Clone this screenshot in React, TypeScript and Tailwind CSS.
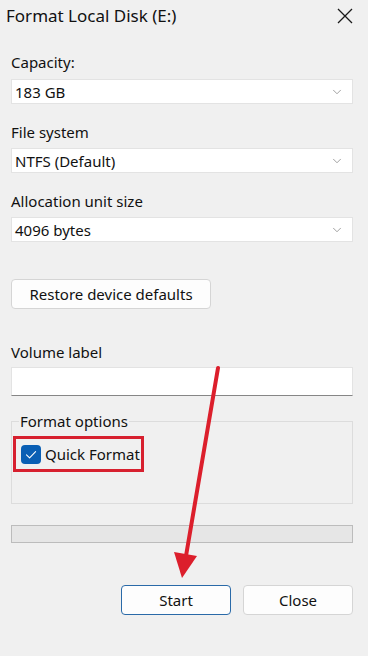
import { ChevronDown } from "lucide-react";

const Combo = ({ value }: { value: string }) => (
  <div className="mt-[6px] flex h-[25px] items-center justify-between border border-[#e3e3e3] bg-white pl-[3px] pr-[8px]">
    <span className="leading-[20px]">{value}</span>
    <ChevronDown className="h-[14px] w-[14px] text-[#7a7a7a]" strokeWidth={1.2} />
  </div>
);

const Label = ({ text, className = "" }: { text: string; className?: string }) => (
  <div className={`h-[20px] leading-[20px] ${className}`}>{text}</div>
);

export default function App() {
  return (
    <div className="relative h-[656px] w-[368px] overflow-hidden bg-[#f0f0f0] text-[15px] text-[#111111] [font-family:'Noto_Sans',sans-serif]">
      <div className="flex h-[32px] items-center justify-between pl-[6px] pr-[15px]">
        <span className="text-[17px] leading-[24px]">Format Local Disk (E:)</span>
        <svg viewBox="0 0 16 16" className="h-[16px] w-[16px]">
          <path d="M1 1 L15 15 M15 1 L1 15" stroke="#1a1a1a" strokeWidth="1.3" fill="none" />
        </svg>
      </div>

      <div className="flex flex-col px-[11px] pr-[15px]">
        <Label text="Capacity:" className="mt-[20px]" />
        <div className="mt-[1px]" />
        <Combo value="183 GB" />

        <Label text="File system" className="mt-[18px]" />
        <Combo value="NTFS (Default)" />

        <Label text="Allocation unit size" className="mt-[18px]" />
        <Combo value="4096 bytes" />

        <button className="mt-[37px] h-[30px] w-[200px] rounded-[4px] border border-[#d5d5d5] bg-[#fdfdfd] leading-[20px]">
          Restore device defaults
        </button>

        <Label text="Volume label" className="mt-[33px]" />
        <div className="mt-[5px] h-[29px] border border-[#e3e3e3] border-b-[#868686] bg-white" />

        <fieldset className="mt-[15px] h-[93px] border border-[#dcdcdc] pl-[1px]">
          <legend className="ml-[6px] px-[1px] leading-[20px]">Format options</legend>
          <div className="mt-[5px] flex w-[131px] items-center border-[3px] border-[#d7202f] py-[5px] pl-[5px]">
            <span className="flex h-[19px] w-[20px] shrink-0 items-center justify-center rounded-[4px] bg-[#0a5fb4]">
              <svg viewBox="0 0 20 19" className="h-[19px] w-[20px]">
                <path d="M5.5 9.8 L8.6 12.8 L14.6 6.6" fill="none" stroke="#fff" strokeWidth="1.1" strokeLinecap="round" strokeLinejoin="round" />
              </svg>
            </span>
            <span className="ml-[4px] whitespace-nowrap leading-[20px]">Quick Format</span>
          </div>
        </fieldset>

        <div className="mt-[21px] h-[18px] border border-[#bcbcbc] bg-[#e6e6e6]" />

        <div className="mt-[42px] flex justify-end gap-[12px]">
          <button className="h-[30px] w-[110px] rounded-[4px] border border-[#2a6aa8] bg-[#fdfdfd] leading-[20px]">Start</button>
          <button className="h-[30px] w-[110px] rounded-[4px] border border-[#d5d5d5] bg-[#fdfdfd] leading-[20px]">Close</button>
        </div>
      </div>

      <svg className="pointer-events-none absolute left-0 top-0" width="368" height="656" viewBox="0 0 368 656">
        <line x1="218" y1="368" x2="186" y2="556" stroke="#dc1f2c" strokeWidth="4" strokeLinecap="round" />
        <polygon points="174,552 197,556 182,578" fill="#dc1f2c" />
      </svg>
    </div>
  );
}
